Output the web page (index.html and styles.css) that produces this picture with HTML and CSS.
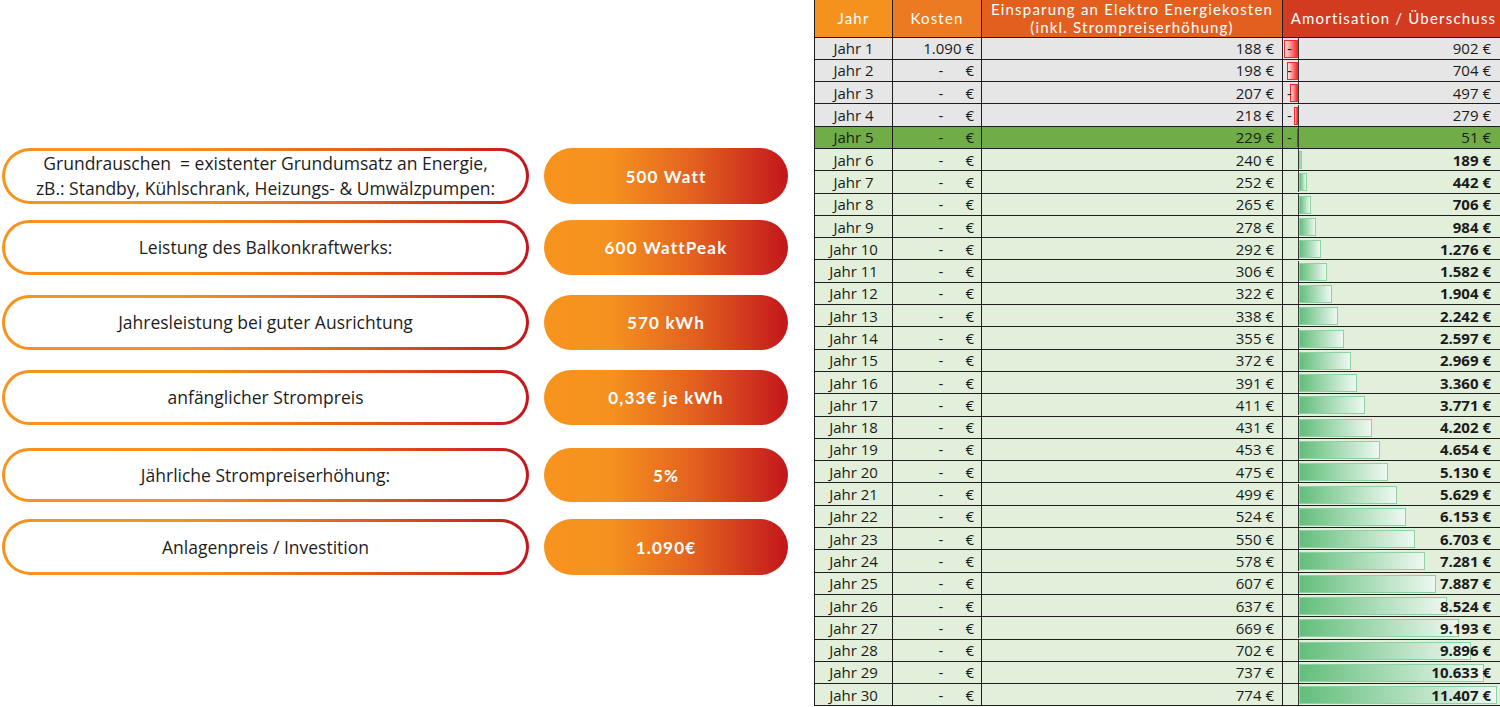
FILE: index.html
```html
<!DOCTYPE html>
<html lang="de">
<head>
<meta charset="utf-8">
<title>Balkonkraftwerk Amortisation</title>
<link rel="stylesheet" href="styles.css">
</head>
<body>
<div class="page">
  <section class="inputs">
    <div class="row r1"><div class="label">Grundrauschen&nbsp; = existenter Grundumsatz an Energie,<br>zB.: Standby, Kühlschrank, Heizungs- &amp; Umwälzpumpen:</div><div class="value">500 Watt</div></div>
    <div class="row r2"><div class="label">Leistung des Balkonkraftwerks:</div><div class="value">600 WattPeak</div></div>
    <div class="row r3"><div class="label">Jahresleistung bei guter Ausrichtung</div><div class="value">570 kWh</div></div>
    <div class="row r4"><div class="label">anfänglicher Strompreis</div><div class="value">0,33€ je kWh</div></div>
    <div class="row r5"><div class="label">Jährliche Strompreiserhöhung:</div><div class="value">5%</div></div>
    <div class="row r6"><div class="label">Anlagenpreis / Investition</div><div class="value">1.090€</div></div>
  </section>

  <table class="sheet">
    <colgroup><col class="c1"><col class="c2"><col class="c3"><col class="c4"></colgroup>
    <thead>
      <tr><th class="h1">Jahr</th><th class="h2">Kosten</th><th class="h3">Einsparung an Elektro Energiekosten<br>(inkl. Strompreiserhöhung)</th><th class="h4">Amortisation / Überschuss</th></tr>
    </thead>
    <tbody>
      <tr class="grey"><td class="yr">Jahr 1</td><td class="cost">1.090 €</td><td class="save">188 €</td><td class="amc"><div class="am"><div class="axis"></div><div class="negz"><div class="bar neg" style="width:14px"></div></div><span class="dash">-</span><span class="v">902 €</span></div></td></tr>
      <tr class="grey"><td class="yr">Jahr 2</td><td class="cost"><span class="d">-</span>€</td><td class="save">198 €</td><td class="amc"><div class="am"><div class="axis"></div><div class="negz"><div class="bar neg" style="width:11px"></div></div><span class="dash">-</span><span class="v">704 €</span></div></td></tr>
      <tr class="grey"><td class="yr">Jahr 3</td><td class="cost"><span class="d">-</span>€</td><td class="save">207 €</td><td class="amc"><div class="am"><div class="axis"></div><div class="negz"><div class="bar neg" style="width:7.7px"></div></div><span class="dash">-</span><span class="v">497 €</span></div></td></tr>
      <tr class="grey"><td class="yr">Jahr 4</td><td class="cost"><span class="d">-</span>€</td><td class="save">218 €</td><td class="amc"><div class="am"><div class="axis"></div><div class="negz"><div class="bar neg" style="width:4.3px"></div></div><span class="dash">-</span><span class="v">279 €</span></div></td></tr>
      <tr class="hit"><td class="yr">Jahr 5</td><td class="cost"><span class="d">-</span>€</td><td class="save">229 €</td><td class="amc"><div class="am"><div class="axis"></div><div class="negz"><div class="bar thin" style="width:1px"></div></div><span class="dash">-</span><span class="v">51 €</span></div></td></tr>
      <tr class="green"><td class="yr">Jahr 6</td><td class="cost"><span class="d">-</span>€</td><td class="save">240 €</td><td class="amc"><div class="am"><div class="axis"></div><div class="posz"><div class="bar pos" style="width:3.3px"></div></div><span class="v b">189 €</span></div></td></tr>
      <tr class="green"><td class="yr">Jahr 7</td><td class="cost"><span class="d">-</span>€</td><td class="save">252 €</td><td class="amc"><div class="am"><div class="axis"></div><div class="posz"><div class="bar pos" style="width:7.7px"></div></div><span class="v b">442 €</span></div></td></tr>
      <tr class="green"><td class="yr">Jahr 8</td><td class="cost"><span class="d">-</span>€</td><td class="save">265 €</td><td class="amc"><div class="am"><div class="axis"></div><div class="posz"><div class="bar pos" style="width:12.3px"></div></div><span class="v b">706 €</span></div></td></tr>
      <tr class="green"><td class="yr">Jahr 9</td><td class="cost"><span class="d">-</span>€</td><td class="save">278 €</td><td class="amc"><div class="am"><div class="axis"></div><div class="posz"><div class="bar pos" style="width:17.1px"></div></div><span class="v b">984 €</span></div></td></tr>
      <tr class="green"><td class="yr">Jahr 10</td><td class="cost"><span class="d">-</span>€</td><td class="save">292 €</td><td class="amc"><div class="am"><div class="axis"></div><div class="posz"><div class="bar pos" style="width:22.1px"></div></div><span class="v b">1.276 €</span></div></td></tr>
      <tr class="green"><td class="yr">Jahr 11</td><td class="cost"><span class="d">-</span>€</td><td class="save">306 €</td><td class="amc"><div class="am"><div class="axis"></div><div class="posz"><div class="bar pos" style="width:27.5px"></div></div><span class="v b">1.582 €</span></div></td></tr>
      <tr class="green"><td class="yr">Jahr 12</td><td class="cost"><span class="d">-</span>€</td><td class="save">322 €</td><td class="amc"><div class="am"><div class="axis"></div><div class="posz"><div class="bar pos" style="width:33px"></div></div><span class="v b">1.904 €</span></div></td></tr>
      <tr class="green"><td class="yr">Jahr 13</td><td class="cost"><span class="d">-</span>€</td><td class="save">338 €</td><td class="amc"><div class="am"><div class="axis"></div><div class="posz"><div class="bar pos" style="width:38.9px"></div></div><span class="v b">2.242 €</span></div></td></tr>
      <tr class="green"><td class="yr">Jahr 14</td><td class="cost"><span class="d">-</span>€</td><td class="save">355 €</td><td class="amc"><div class="am"><div class="axis"></div><div class="posz"><div class="bar pos" style="width:45.1px"></div></div><span class="v b">2.597 €</span></div></td></tr>
      <tr class="green"><td class="yr">Jahr 15</td><td class="cost"><span class="d">-</span>€</td><td class="save">372 €</td><td class="amc"><div class="am"><div class="axis"></div><div class="posz"><div class="bar pos" style="width:51.5px"></div></div><span class="v b">2.969 €</span></div></td></tr>
      <tr class="green"><td class="yr">Jahr 16</td><td class="cost"><span class="d">-</span>€</td><td class="save">391 €</td><td class="amc"><div class="am"><div class="axis"></div><div class="posz"><div class="bar pos" style="width:58.3px"></div></div><span class="v b">3.360 €</span></div></td></tr>
      <tr class="green"><td class="yr">Jahr 17</td><td class="cost"><span class="d">-</span>€</td><td class="save">411 €</td><td class="amc"><div class="am"><div class="axis"></div><div class="posz"><div class="bar pos" style="width:65.5px"></div></div><span class="v b">3.771 €</span></div></td></tr>
      <tr class="green"><td class="yr">Jahr 18</td><td class="cost"><span class="d">-</span>€</td><td class="save">431 €</td><td class="amc"><div class="am"><div class="axis"></div><div class="posz"><div class="bar pos" style="width:72.9px"></div></div><span class="v b">4.202 €</span></div></td></tr>
      <tr class="green"><td class="yr">Jahr 19</td><td class="cost"><span class="d">-</span>€</td><td class="save">453 €</td><td class="amc"><div class="am"><div class="axis"></div><div class="posz"><div class="bar pos" style="width:80.8px"></div></div><span class="v b">4.654 €</span></div></td></tr>
      <tr class="green"><td class="yr">Jahr 20</td><td class="cost"><span class="d">-</span>€</td><td class="save">475 €</td><td class="amc"><div class="am"><div class="axis"></div><div class="posz"><div class="bar pos" style="width:89px"></div></div><span class="v b">5.130 €</span></div></td></tr>
      <tr class="green"><td class="yr">Jahr 21</td><td class="cost"><span class="d">-</span>€</td><td class="save">499 €</td><td class="amc"><div class="am"><div class="axis"></div><div class="posz"><div class="bar pos" style="width:97.7px"></div></div><span class="v b">5.629 €</span></div></td></tr>
      <tr class="green"><td class="yr">Jahr 22</td><td class="cost"><span class="d">-</span>€</td><td class="save">524 €</td><td class="amc"><div class="am"><div class="axis"></div><div class="posz"><div class="bar pos" style="width:106.8px"></div></div><span class="v b">6.153 €</span></div></td></tr>
      <tr class="green"><td class="yr">Jahr 23</td><td class="cost"><span class="d">-</span>€</td><td class="save">550 €</td><td class="amc"><div class="am"><div class="axis"></div><div class="posz"><div class="bar pos" style="width:116.3px"></div></div><span class="v b">6.703 €</span></div></td></tr>
      <tr class="green"><td class="yr">Jahr 24</td><td class="cost"><span class="d">-</span>€</td><td class="save">578 €</td><td class="amc"><div class="am"><div class="axis"></div><div class="posz"><div class="bar pos" style="width:126.4px"></div></div><span class="v b">7.281 €</span></div></td></tr>
      <tr class="green"><td class="yr">Jahr 25</td><td class="cost"><span class="d">-</span>€</td><td class="save">607 €</td><td class="amc"><div class="am"><div class="axis"></div><div class="posz"><div class="bar pos" style="width:136.9px"></div></div><span class="v b">7.887 €</span></div></td></tr>
      <tr class="green"><td class="yr">Jahr 26</td><td class="cost"><span class="d">-</span>€</td><td class="save">637 €</td><td class="amc"><div class="am"><div class="axis"></div><div class="posz"><div class="bar pos" style="width:148px"></div></div><span class="v b">8.524 €</span></div></td></tr>
      <tr class="green"><td class="yr">Jahr 27</td><td class="cost"><span class="d">-</span>€</td><td class="save">669 €</td><td class="amc"><div class="am"><div class="axis"></div><div class="posz"><div class="bar pos" style="width:159.6px"></div></div><span class="v b">9.193 €</span></div></td></tr>
      <tr class="green"><td class="yr">Jahr 28</td><td class="cost"><span class="d">-</span>€</td><td class="save">702 €</td><td class="amc"><div class="am"><div class="axis"></div><div class="posz"><div class="bar pos" style="width:171.8px"></div></div><span class="v b">9.896 €</span></div></td></tr>
      <tr class="green"><td class="yr">Jahr 29</td><td class="cost"><span class="d">-</span>€</td><td class="save">737 €</td><td class="amc"><div class="am"><div class="axis"></div><div class="posz"><div class="bar pos" style="width:184.6px"></div></div><span class="v b">10.633 €</span></div></td></tr>
      <tr class="green"><td class="yr">Jahr 30</td><td class="cost"><span class="d">-</span>€</td><td class="save">774 €</td><td class="amc"><div class="am"><div class="axis"></div><div class="posz"><div class="bar pos" style="width:198px"></div></div><span class="v b">11.407 €</span></div></td></tr>
    </tbody>
  </table>
</div>
</body>
</html>
```
FILE: styles.css
```css
* { box-sizing: border-box; }
html, body { margin: 0; padding: 0; }
body {
  width: 1500px;
  height: 707px;
  overflow: hidden;
  background: #ffffff;
  font-family: "Open Sans", "Liberation Sans", sans-serif;
  color: #1b1b1b;
}
.page {
  display: flex;
  align-items: flex-start;
}

/* ---------- input pills ---------- */
.inputs {
  flex: none;
  width: 814px;
  padding: 148px 0 0 2px;
  display: flex;
  flex-direction: column;
}
.row {
  display: flex;
  gap: 15px;
  height: 55px;
}
.r1 { height: 56px; }
.r2 { margin-top: 16px; }
.r3 { margin-top: 20px; }
.r4 { margin-top: 20px; }
.r5 { margin-top: 23px; height: 54px; }
.r6 { margin-top: 17px; height: 56px; }

.label {
  flex: none;
  width: 527px;
  border: 3px solid transparent;
  border-radius: 28px;
  background:
    linear-gradient(#fff, #fff) padding-box,
    linear-gradient(90deg, #F7941E 0%, #F5911E 35%, #E2601F 68%, #C3161C 100%) border-box;
  display: flex;
  align-items: center;
  justify-content: center;
  text-align: center;
  font-size: 17.5px;
  line-height: 25px;
  color: #1d1d1d;
}
.value {
  flex: none;
  width: 244px;
  border-radius: 28px;
  background: linear-gradient(90deg, #F7941E 0%, #F5911E 28%, #E2601F 62%, #C3161C 100%);
  display: flex;
  align-items: center;
  justify-content: center;
  color: #ffffff;
  font-family: Lato, "Open Sans", sans-serif;
  font-weight: 700;
  font-size: 17px;
  letter-spacing: 1.2px;
}

/* ---------- table ---------- */
.sheet {
  flex: none;
  border-collapse: collapse;
  table-layout: fixed;
  width: 690px;
  font-size: 15px;
  line-height: 20px;
}
.c1 { width: 78px; }
.c2 { width: 89px; }
.c3 { width: 301px; }
.c4 { width: 222px; }
.sheet th, .sheet td {
  border: 1px solid #1e1e1e;
  padding: 0;
  white-space: nowrap;
  overflow: hidden;
}
.sheet thead tr { height: 37px; }
.sheet th {
  border-top: none;
  color: #ffffff;
  font-family: Lato, "Open Sans", sans-serif;
  font-weight: 400;
  font-size: 15px;
  letter-spacing: 1.2px;
  line-height: 18px;
  text-align: center;
}
.h1 { background: #F5921E; }
.h2 { background: #EB7A22; }
.h3 { background: #E25F20; }
.h4 { background: #D33B20; }

.sheet tbody tr { height: 22.3px; }
.grey td { background: #E7E6E6; }
.hit td { background: #70AD47; }
.green td { background: #E2EFDA; }

.yr { text-align: center; }
.cost { text-align: right; padding-right: 7px !important; }
.cost .d { margin-right: 22px; }
.save { text-align: right; padding-right: 8px !important; }

.amc { overflow: visible; }
.am {
  position: relative;
  height: 21px;
  display: flex;
  align-items: center;
  justify-content: flex-end;
  padding-right: 13px;
}
.axis {
  position: absolute;
  left: 15px;
  top: 0;
  bottom: 0;
  width: 1px;
  background: #3a3a3a;
}
.negz {
  position: absolute;
  left: 0;
  width: 15px;
  top: 2px;
  bottom: 1px;
  display: flex;
  justify-content: flex-end;
}
.posz {
  position: absolute;
  left: 16px;
  right: 0;
  top: 2px;
  bottom: 1px;
  display: flex;
}
.bar { height: 100%; flex: none; }
.bar.neg {
  border: 1px solid #F02828;
  background: linear-gradient(90deg, #FFE4E4, #FF2A2A);
}
.bar.thin { background: #E01818; }
.bar.pos {
  border: 1px solid #8CD2A2;
  background: linear-gradient(90deg, #63BE7B, #EEF8F1);
}
.dash {
  position: absolute;
  left: 4px;
  z-index: 1;
}
.v { position: relative; z-index: 1; }
.b { font-weight: 700; }
```
